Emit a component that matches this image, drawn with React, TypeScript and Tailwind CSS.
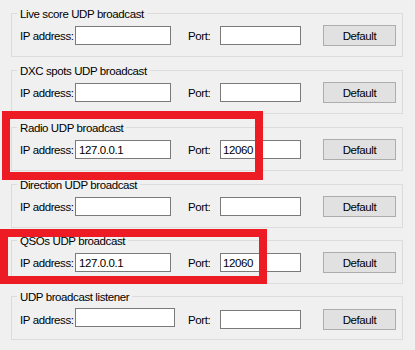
const GROUPS = [
  { title: 'Live score UDP broadcast', ip: '', port: '', mt: 'mt-[13px]', wide: false },
  { title: 'DXC spots UDP broadcast', ip: '', port: '', mt: 'mt-[13px]', wide: false },
  { title: 'Radio UDP broadcast', ip: '127.0.0.1', port: '12060', mt: 'mt-[13px]', wide: false },
  { title: 'Direction UDP broadcast', ip: '', port: '', mt: 'mt-[13px]', wide: false },
  { title: 'QSOs UDP broadcast', ip: '127.0.0.1', port: '12060', mt: 'mt-[12px]', wide: false },
  { title: 'UDP broadcast listener', ip: '', port: '', mt: 'mt-[12px]', wide: true },
]

function Group({ g }: { g: (typeof GROUPS)[number] }) {
  return (
    <div className={`relative h-[44px] border border-[#dcdcdc] ${g.mt}`}>
      <span className="absolute -top-[7px] left-[5px] whitespace-nowrap bg-[#f0f0f0] px-[3px] leading-[14px]">{g.title}</span>
      <div className="flex items-center pl-[8px] pt-[11px]">
        <span className="w-[55px] shrink-0 whitespace-nowrap leading-[14px]">IP address:</span>
        <input
          readOnly
          value={g.ip}
          className={`h-[19px] shrink-0 border border-[#7a7a7a] bg-white pl-[3px] text-black outline-none ${g.wide ? 'mb-[4px] w-[100px]' : 'w-[96px]'}`}
        />
        <span className={`w-[32px] shrink-0 whitespace-nowrap leading-[14px] ${g.wide ? 'ml-[13px]' : 'ml-[17px]'}`}>Port:</span>
        <input
          readOnly
          value={g.port}
          className="h-[19px] w-[81px] shrink-0 border border-[#7a7a7a] bg-white pl-[2px] text-black outline-none"
        />
        <button className="ml-[22px] h-[21px] w-[73px] shrink-0 border border-[#adadad] bg-[#e1e1e1] leading-[14px] text-black">
          Default
        </button>
      </div>
    </div>
  )
}

export default function App() {
  return (
    <div className="relative h-[350px] w-[415px] overflow-hidden bg-[#f0f0f0] text-[11.5px] tracking-[-0.4px] text-black [font-family:'Liberation_Sans',Arial,sans-serif]">
      <div className="flex w-[403px] flex-col pl-[11px]">
        {GROUPS.map(g => (
          <Group key={g.title} g={g} />
        ))}
      </div>
      {/* highlight boxes drawn over the form */}
      <div className="pointer-events-none absolute left-[2px] top-[111px] h-[69px] w-[261px] border-[8px] border-[#ed1c24]" />
      <div className="pointer-events-none absolute left-0 top-[229px] h-[55px] w-[267px] border-[8px] border-[#ed1c24]" />
    </div>
  )
}
